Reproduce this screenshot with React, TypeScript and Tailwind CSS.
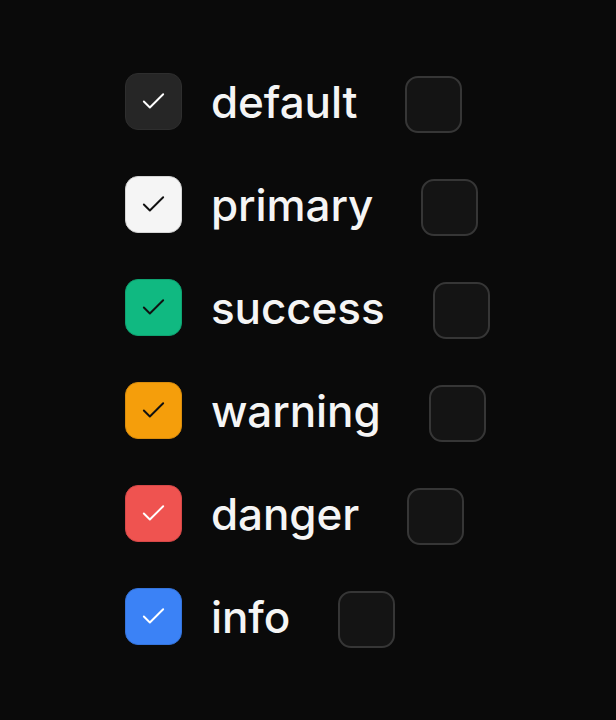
import { Check } from "lucide-react";

const ROWS = [
  { label: "default", box: "bg-[#262626] border-[#2e2e2e]", check: "text-white" },
  { label: "primary", box: "bg-[#f5f5f5] border-[#d4d4d4]", check: "text-[#111]" },
  { label: "success", box: "bg-[#10b981] border-[#0ea371]", check: "text-[#111]" },
  { label: "warning", box: "bg-[#f59e0b] border-[#d98c0c]", check: "text-[#111]" },
  { label: "danger", box: "bg-[#ef5350] border-[#d64848]", check: "text-white" },
  { label: "info", box: "bg-[#3b82f6] border-[#3574db]", check: "text-white" },
];

export default function App() {
  return (
    <div
      className="min-h-[720px] w-full bg-[#0a0a0a] pl-[125px] pt-[73px]"
      style={{ fontFamily: "Inter, 'Noto Sans', sans-serif" }}
    >
      <div className="flex flex-col gap-[43px]">
        {ROWS.map((row) => (
          <div key={row.label} className="flex h-[60px] items-start">
            <div
              className={`flex h-[57px] w-[57px] items-center justify-center rounded-[13px] border-[1.5px] ${row.box}`}
            >
              <Check className={`h-[29px] w-[29px] ${row.check}`} strokeWidth={1.6} />
            </div>
            <span className="ml-[29px] mt-[1px] text-[44px] font-medium leading-[57px] tracking-[-0.1px] text-[#f5f5f5]">
              {row.label}
            </span>
            <div className="ml-[48px] mt-[3px] h-[57px] w-[57px] rounded-[13px] border-2 border-[#363636] bg-[#141414]" />
          </div>
        ))}
      </div>
    </div>
  );
}
